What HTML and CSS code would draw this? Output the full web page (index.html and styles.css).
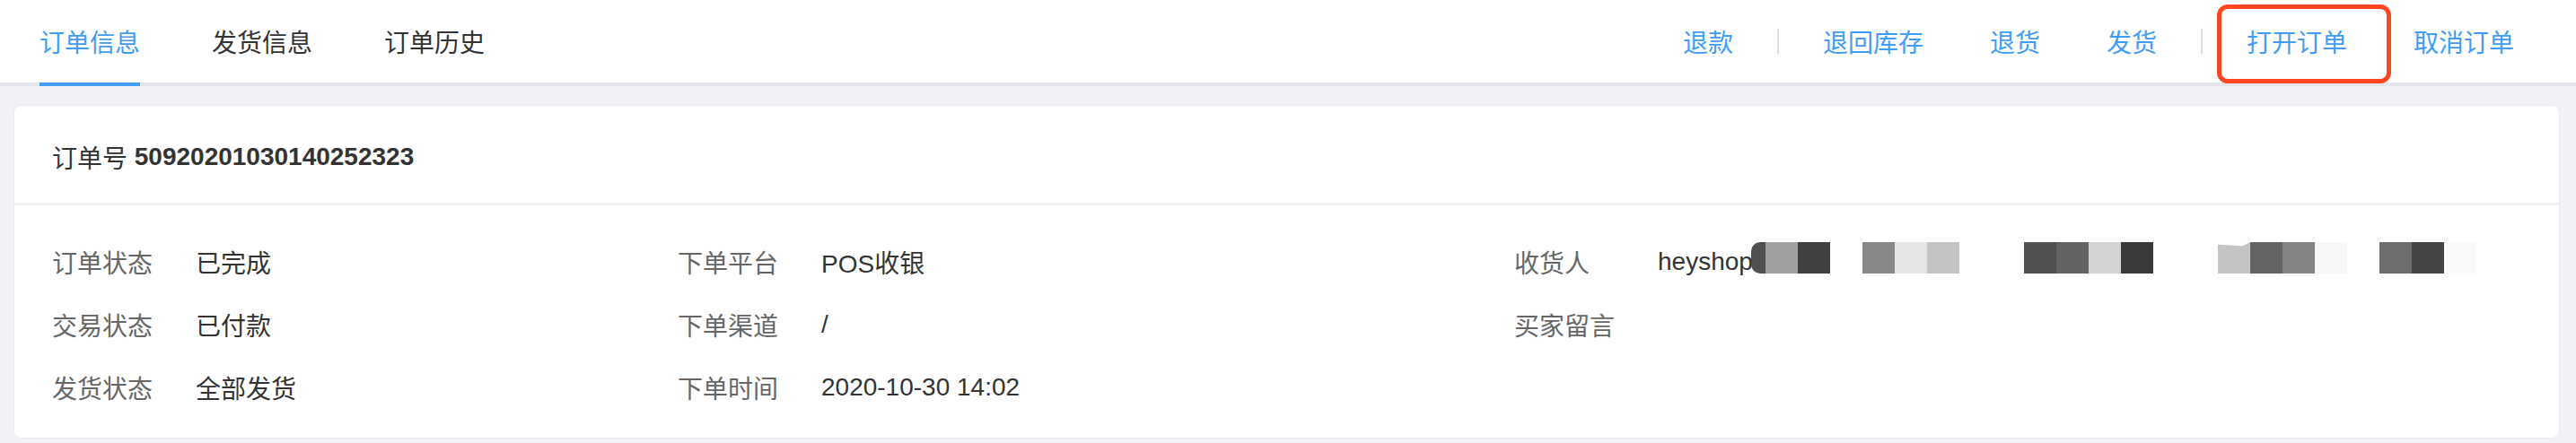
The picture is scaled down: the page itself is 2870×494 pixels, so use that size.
FILE: index.html
```html
<!DOCTYPE html>
<html lang="zh-CN">
<head>
<meta charset="utf-8">
<title>订单信息</title>
<link rel="stylesheet" href="styles.css">
</head>
<body>
<header class="nav">
  <nav class="tabs">
    <a class="tab active">订单信息</a>
    <a class="tab">发货信息</a>
    <a class="tab">订单历史</a>
  </nav>
  <div class="actions">
    <a class="act">退款</a>
    <span class="sep"></span>
    <a class="act">退回库存</a>
    <a class="act">退货</a>
    <a class="act">发货</a>
    <span class="sep"></span>
    <a class="act marked">打开订单<span class="mark"></span></a>
    <a class="act">取消订单</a>
  </div>
</header>

<section class="card">
  <div class="card-head">订单号&nbsp;<b class="order-no">50920201030140252323</b></div>
  <div class="card-body">
    <div class="col">
      <div class="row"><span class="label">订单状态</span><span class="value">已完成</span></div>
      <div class="row"><span class="label">交易状态</span><span class="value">已付款</span></div>
      <div class="row"><span class="label">发货状态</span><span class="value">全部发货</span></div>
    </div>
    <div class="col">
      <div class="row"><span class="label">下单平台</span><span class="value">POS收银</span></div>
      <div class="row"><span class="label">下单渠道</span><span class="value">/</span></div>
      <div class="row"><span class="label">下单时间</span><span class="value">2020-10-30 14:02</span></div>
    </div>
    <div class="col">
      <div class="row"><span class="label">收货人</span><span class="value">heyshop<span class="mosaic">
        <i class="px first c50"></i><i class="px ca0"></i><i class="px c40"></i><i class="px"></i><i class="px c88"></i><i class="px ce6"></i><i class="px cc4"></i><i class="px"></i><i class="px"></i><i class="px c50"></i><i class="px c63"></i><i class="px cd4"></i><i class="px c3a"></i><i class="px"></i><i class="px"></i><i class="px cc4 notch"></i><i class="px c64"></i><i class="px c84"></i><i class="px cf7"></i><i class="px"></i><i class="px c6e"></i><i class="px c44"></i><i class="px cfa"></i>
      </span></span></div>
      <div class="row"><span class="label">买家留言</span><span class="value"></span></div>
    </div>
  </div>
</section>
</body>
</html>
```

FILE: styles.css
```css
* { box-sizing: border-box; }

body {
  margin: 0;
  background: #f1f2f6;
  font-family: "Liberation Sans", "Noto Sans CJK SC", sans-serif;
  font-size: 28px;
  color: #333;
}

a { text-decoration: none; cursor: pointer; }

.nav {
  display: flex;
  justify-content: space-between;
  align-items: stretch;
  height: 96px;
  background: #fff;
  border-bottom: 4px solid #e4e6ed;
}

.tabs {
  display: flex;
  gap: 80px;
  padding-left: 44px;
}

.tab {
  display: flex;
  align-items: center;
  height: 96px;
  margin-bottom: -4px;
  padding-top: 6px;
  border-bottom: 4px solid transparent;
  color: #333;
  line-height: 1;
}

.tab.active {
  color: #3f9cf7;
  border-bottom-color: #3f9cf7;
}

.actions {
  display: flex;
  align-items: center;
  padding-right: 32px;
}

.act {
  position: relative;
  display: flex;
  align-items: center;
  height: 92px;
  padding: 6px 37px 0;
  color: #3f9cf7;
  line-height: 1;
}

.sep {
  width: 2px;
  height: 28px;
  margin: 0 12px;
  background: #d9dde3;
}

.mark {
  position: absolute;
  left: 4px;
  top: 5px;
  width: 194px;
  height: 88px;
  border: 5px solid #ff4521;
  border-radius: 12px;
}

.card {
  margin: 21px 18px 0 15px;
  background: #fff;
  border: 1px solid #e9ebf0;
  border-radius: 8px;
}

.card-head {
  display: flex;
  align-items: center;
  height: 111px;
  padding: 6px 0 0 42px;
  border-bottom: 3px solid #eef0f4;
  color: #333;
}

.order-no { font-weight: bold; }

.card-body {
  display: grid;
  grid-template-columns: 697px 932px 1fr;
  padding: 25px 0 24px 42px;
}

.col {
  display: flex;
  flex-direction: column;
}

.row {
  display: flex;
  align-items: center;
  height: 70px;
  padding-top: 5px;
}

.label {
  width: 160px;
  flex: none;
  color: #666;
}

.value {
  display: flex;
  align-items: center;
  color: #333;
  white-space: nowrap;
}

.mosaic {
  display: flex;
  margin-left: -2px;
  margin-top: -8px;
  height: 35px;
}

.px {
  display: block;
  width: 36px;
  height: 35px;
}

.px.first {
  width: 16px;
  border-radius: 10px 0 0 10px;
}

.px.notch {
  clip-path: polygon(0 8%, 78% 12%, 100% 0, 100% 100%, 0 100%);
}

.c50 { background: #505050; }
.ca0 { background: #a0a0a0; }
.c40 { background: #404040; }
.c88 { background: #888888; }
.ce6 { background: #e6e6e6; }
.cc4 { background: #c4c4c4; }
.c63 { background: #636363; }
.cd4 { background: #d4d4d4; }
.c3a { background: #3a3a3a; }
.c64 { background: #646464; }
.c84 { background: #848484; }
.cf7 { background: #f7f7f9; }
.c6e { background: #6e6e6e; }
.c44 { background: #444444; }
.cfa { background: #fafafa; }
```
